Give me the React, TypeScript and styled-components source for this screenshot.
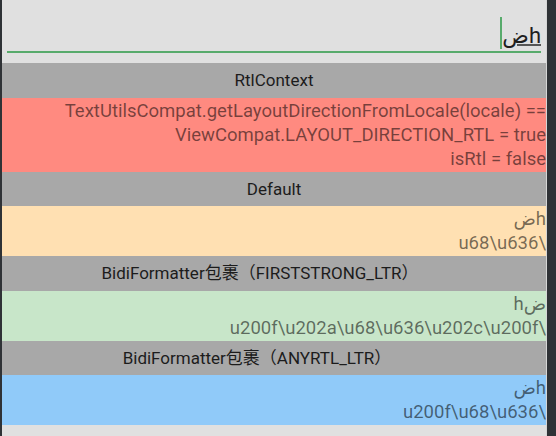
import React from 'react'
import styled, { createGlobalStyle } from 'styled-components'

const GlobalStyle = createGlobalStyle`
  html, body {
    margin: 0;
    padding: 0;
    background: #2f3236;
  }
  body {
    font-family: Roboto, 'DejaVu Sans', 'Noto Sans CJK SC', sans-serif;
  }
`

type Tone = 'red' | 'orange' | 'green' | 'blue'

const tones: Record<Tone, string> = {
  red: '#ff8a80',
  orange: '#ffe0b2',
  green: '#c8e6c9',
  blue: '#90caf9',
}

interface Section {
  title: string
  tone: Tone
  shift?: number
  lines: { text: string; visual?: boolean }[]
}

const sections: Section[] = [
  {
    title: 'RtlContext',
    tone: 'red',
    lines: [
      { text: 'TextUtilsCompat.getLayoutDirectionFromLocale(locale) ==' },
      { text: 'ViewCompat.LAYOUT_DIRECTION_RTL = true' },
      { text: 'isRtl = false' },
    ],
  },
  {
    title: 'Default',
    tone: 'orange',
    lines: [{ text: 'ضh', visual: true }, { text: 'u68\\u636\\' }],
  },
  {
    title: 'BidiFormatter包裹（FIRSTSTRONG_LTR）',
    tone: 'green',
    shift: 28,
    lines: [
      { text: 'hض', visual: true },
      { text: 'u200f\\u202a\\u68\\u636\\u202c\\u200f\\' },
    ],
  },
  {
    title: 'BidiFormatter包裹（ANYRTL_LTR）',
    tone: 'blue',
    shift: 34,
    lines: [{ text: 'ضh', visual: true }, { text: 'u200f\\u68\\u636\\' }],
  },
]

const App = () => {
  return (
    <Frame>
      <GlobalStyle />
      <Panel>
        <InputArea>
          <Field>
            <Caret />
            <Composing>ضh</Composing>
          </Field>
        </InputArea>

        {sections.map((section) => (
          <React.Fragment key={section.title}>
            <Header $shift={section.shift}>{section.title}</Header>
            <Block tone={section.tone}>
              {section.lines.map((line, i) => (
                <Line key={i} $visual={line.visual}>
                  {line.text}
                </Line>
              ))}
            </Block>
          </React.Fragment>
        ))}
      </Panel>
    </Frame>
  )
}

export default App

const Frame = styled.div`
  display: flex;
  height: 436px;
  padding: 0 9px 0 2px;
  background: #2f3236;
`

const Panel = styled.div`
  flex: 1;
  display: flex;
  flex-direction: column;
  background: #e0e0e0;
  border-right: 1px solid #d6d6d6;
  overflow: hidden;
`

const InputArea = styled.div`
  flex: none;
  height: 63px;
  padding: 0 5px;
  box-sizing: border-box;
`

const Field = styled.div`
  height: 53px;
  box-sizing: border-box;
  border-bottom: 2px solid #58ab6c;
  padding-bottom: 2px;
  display: flex;
  justify-content: flex-end;
  align-items: flex-end;
`

const Caret = styled.span`
  width: 2px;
  height: 32px;
  background: #58ab6c;
`

const Composing = styled.span`
  font-size: 22px;
  line-height: 24px;
  margin-bottom: 1px;
  color: #1e1e1e;
  direction: ltr;
  unicode-bidi: bidi-override;
  text-decoration: underline;
  text-decoration-color: #555;
  text-decoration-thickness: 2px;
  text-underline-offset: 1px;
`

const Header = styled.div<{ $shift?: number }>`
  flex: none;
  height: 34.5px;
  line-height: 35px;
  padding-right: ${(p) => p.$shift ?? 0}px;
  text-align: center;
  font-size: 17px;
  color: #1c1c1c;
  background: #a8a8a8;
  white-space: nowrap;
`

const Block = styled.div<{ tone: Tone }>`
  flex: none;
  padding: 1px 0;
  background: ${(p) => tones[p.tone]};
  display: flex;
  flex-direction: column;
  align-items: flex-end;
  overflow: hidden;
`

const Line = styled.div<{ $visual?: boolean }>`
  font-size: 18.5px;
  line-height: 24px;
  color: rgba(0, 0, 0, 0.54);
  white-space: nowrap;
  direction: ltr;
  unicode-bidi: ${(p) => (p.$visual ? 'bidi-override' : 'normal')};
`
